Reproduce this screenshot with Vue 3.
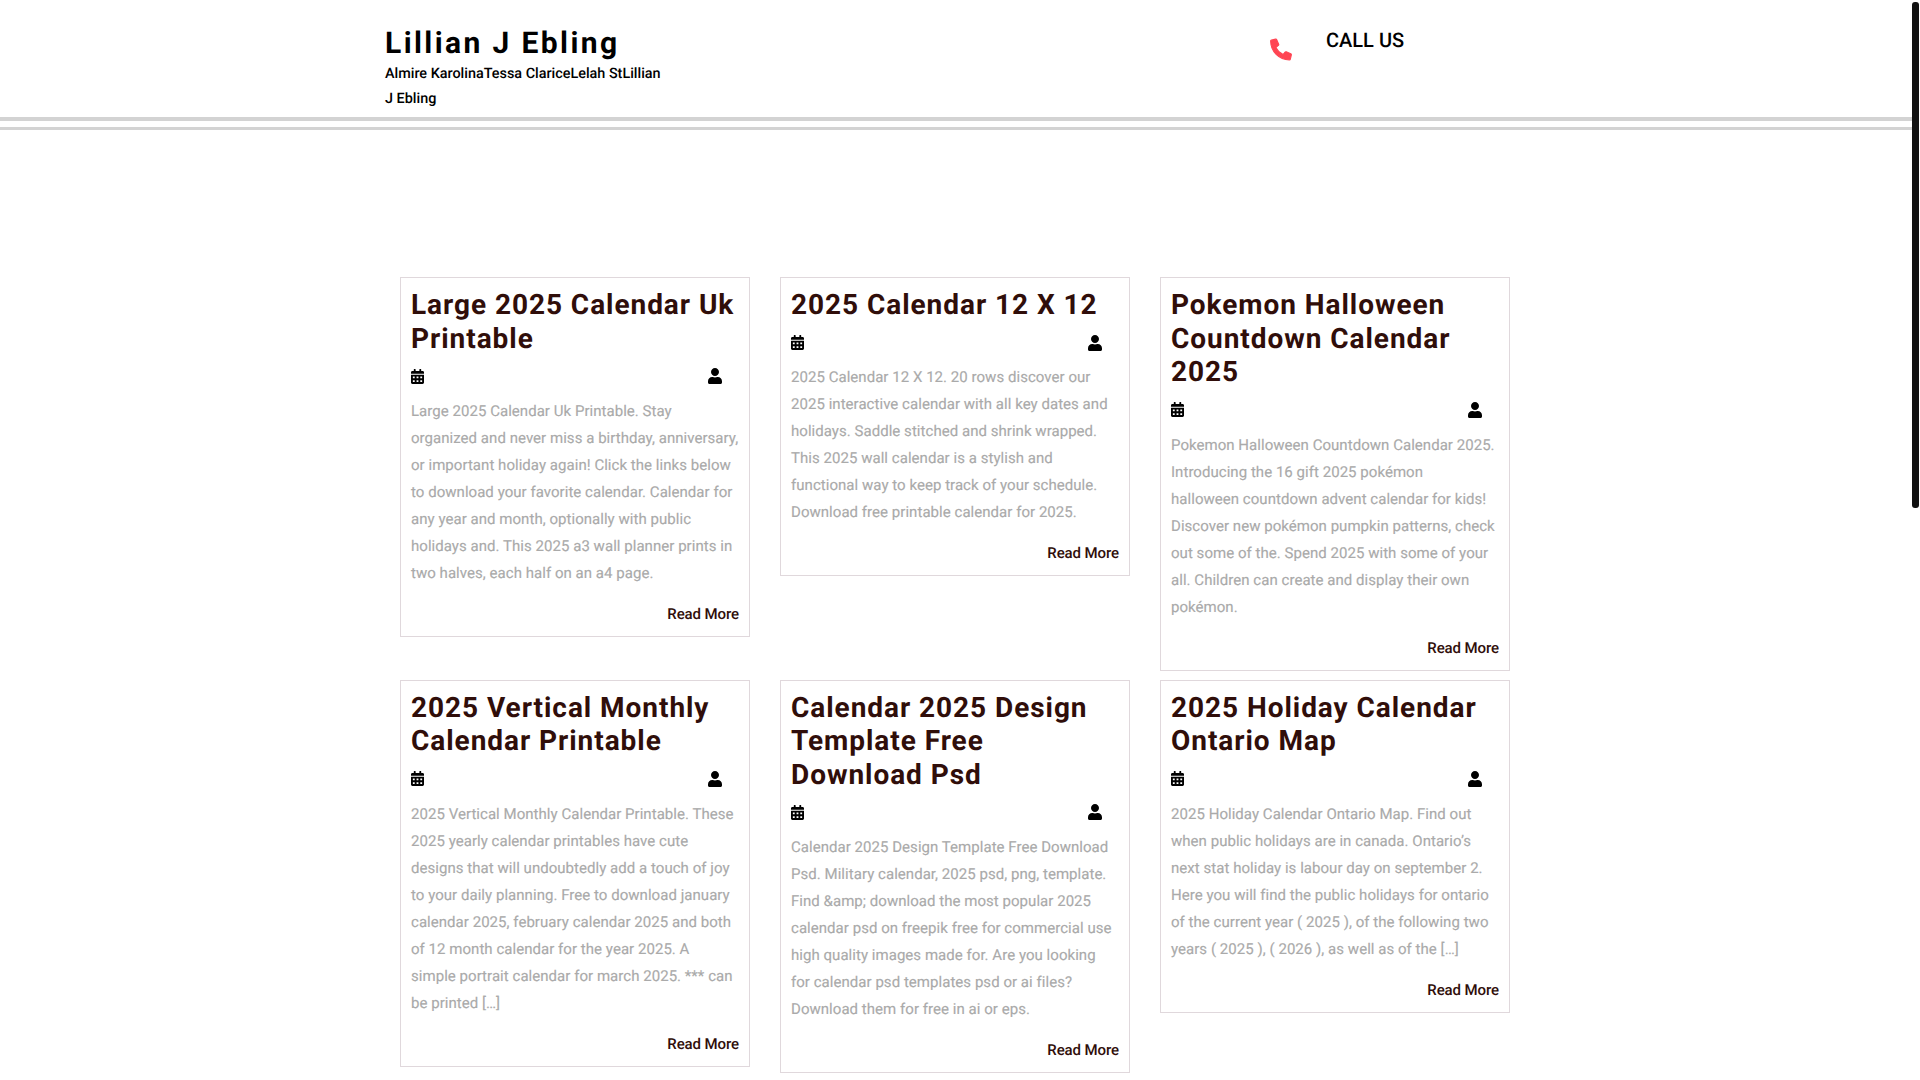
<script setup>
const posts = [
  {
    title: 'Large 2025 Calendar Uk Printable',
    text: 'Large 2025 Calendar Uk Printable. Stay\norganized and never miss a birthday, anniversary,\nor important holiday again! Click the links below\nto download your favorite calendar. Calendar for\nany year and month, optionally with public\nholidays and. This 2025 a3 wall planner prints in\ntwo halves, each half on an a4 page.'
  },
  {
    title: '2025 Calendar 12 X 12',
    text: '2025 Calendar 12 X 12. 20 rows discover our\n2025 interactive calendar with all key dates and\nholidays. Saddle stitched and shrink wrapped.\nThis 2025 wall calendar is a stylish and\nfunctional way to keep track of your schedule.\nDownload free printable calendar for 2025.'
  },
  {
    title: 'Pokemon Halloween Countdown Calendar 2025',
    text: 'Pokemon Halloween Countdown Calendar 2025.\nIntroducing the 16 gift 2025 pokémon\nhalloween countdown advent calendar for kids!\nDiscover new pokémon pumpkin patterns, check\nout some of the. Spend 2025 with some of your\nall. Children can create and display their own\npokémon.'
  },
  {
    title: '2025 Vertical Monthly Calendar Printable',
    text: '2025 Vertical Monthly Calendar Printable. These\n2025 yearly calendar printables have cute\ndesigns that will undoubtedly add a touch of joy\nto your daily planning. Free to download january\ncalendar 2025, february calendar 2025 and both\nof 12 month calendar for the year 2025. A\nsimple portrait calendar for march 2025. *** can\nbe printed […]'
  },
  {
    title: 'Calendar 2025 Design Template Free Download Psd',
    text: 'Calendar 2025 Design Template Free Download\nPsd. Military calendar, 2025 psd, png, template.\nFind &amp; download the most popular 2025\ncalendar psd on freepik free for commercial use\nhigh quality images made for. Are you looking\nfor calendar psd templates psd or ai files?\nDownload them for free in ai or eps.'
  },
  {
    title: '2025 Holiday Calendar Ontario Map',
    text: '2025 Holiday Calendar Ontario Map. Find out\nwhen public holidays are in canada. Ontario’s\nnext stat holiday is labour day on september 2.\nHere you will find the public holidays for ontario\nof the current year ( 2025 ), of the following two\nyears ( 2025 ), ( 2026 ), as well as of the […]'
  }
]
</script>

<template>
  <div class="window">
    <div class="page">
      <header class="site-header">
        <div class="header-inner">
          <div class="brand">
            <h1 class="brand-name">Lillian J Ebling</h1>
            <p class="brand-tag">Almire KarolinaTessa ClariceLelah StLillian J Ebling</p>
          </div>
          <div class="contact">
            <svg class="phone" viewBox="-16 -16 544 544">
              <path fill="#ff4553" stroke="#ff4553" stroke-width="28" stroke-linejoin="round" d="M497.39 361.8l-112-48a24 24 0 0 0-28 6.9l-49.6 60.6A370.66 370.66 0 0 1 130.6 204.11l60.6-49.6a23.94 23.94 0 0 0 6.9-28l-48-112A24.16 24.16 0 0 0 122.6.61l-104 24A24 24 0 0 0 0 48c0 256.5 207.9 464 464 464a24 24 0 0 0 23.4-18.6l24-104a24.29 24.29 0 0 0-14.01-27.6z" />
            </svg>
            <span class="call">CALL US</span>
          </div>
        </div>
      </header>
      <div class="header-rule"></div>

      <main class="posts">
        <article v-for="post in posts" :key="post.title" class="post">
          <h2 class="post-title">{{ post.title }}</h2>
          <div class="post-meta">
            <svg class="icon-cal" viewBox="0 0 448 512">
              <path d="M0 464c0 26.5 21.5 48 48 48h352c26.5 0 48-21.5 48-48V192H0v272zm320-196c0-6.6 5.4-12 12-12h40c6.6 0 12 5.4 12 12v40c0 6.6-5.4 12-12 12h-40c-6.6 0-12-5.4-12-12v-40zm0 128c0-6.6 5.4-12 12-12h40c6.6 0 12 5.4 12 12v40c0 6.6-5.4 12-12 12h-40c-6.6 0-12-5.4-12-12v-40zM192 268c0-6.6 5.4-12 12-12h40c6.6 0 12 5.4 12 12v40c0 6.6-5.4 12-12 12h-40c-6.6 0-12-5.4-12-12v-40zm0 128c0-6.6 5.4-12 12-12h40c6.6 0 12 5.4 12 12v40c0 6.6-5.4 12-12 12h-40c-6.6 0-12-5.4-12-12v-40zM64 268c0-6.6 5.4-12 12-12h40c6.6 0 12 5.4 12 12v40c0 6.6-5.4 12-12 12H76c-6.6 0-12-5.4-12-12v-40zm0 128c0-6.6 5.4-12 12-12h40c6.6 0 12 5.4 12 12v40c0 6.6-5.4 12-12 12H76c-6.6 0-12-5.4-12-12v-40zM400 64h-48V16c0-8.8-7.2-16-16-16h-32c-8.8 0-16 7.2-16 16v48H160V16c0-8.8-7.2-16-16-16h-32c-8.8 0-16 7.2-16 16v48H48C21.5 64 0 85.5 0 112v48h448v-48c0-26.5-21.5-48-48-48z" />
            </svg>
            <svg class="icon-user" viewBox="0 0 448 512" preserveAspectRatio="none">
              <path d="M224 256c70.7 0 128-57.3 128-128S294.7 0 224 0 96 57.3 96 128s57.3 128 128 128zm89.6 32h-16.7c-22.2 10.2-46.9 16-72.9 16s-50.6-5.8-72.9-16h-16.7C60.2 288 0 348.2 0 422.4V464c0 26.5 21.5 48 48 48h352c26.5 0 48-21.5 48-48v-41.6c0-74.2-60.2-134.4-134.4-134.4z" />
            </svg>
          </div>
          <p class="post-text">{{ post.text }}</p>
          <a class="read-more" href="#">Read More</a>
        </article>
      </main>
    </div>
    <div class="scrollbar">
      <div class="scrollbar-thumb"></div>
    </div>
  </div>
</template>

<style scoped>
.window {
  display: flex;
  height: 1080px;
  overflow: hidden;
  font-family: Roboto, "Liberation Sans", sans-serif;
  text-rendering: geometricPrecision;
  background: #fff;
}

.page {
  flex: 1;
  min-width: 0;
}

.scrollbar {
  width: 8px;
  padding: 2px 1px 0 0;
  box-sizing: border-box;
}

.scrollbar-thumb {
  height: 506px;
  background: #111;
  border-radius: 3px;
}

.site-header {
  border-bottom: 4px solid #d3d3d3;
}

.header-rule {
  height: 3px;
  margin-top: 6px;
  background: #d3d3d3;
}

.header-inner {
  width: 1142px;
  height: 117px;
  margin: 0 auto;
  display: flex;
  justify-content: space-between;
}

.brand {
  width: 285px;
  padding-top: 26px;
}

.brand-name {
  margin: 0;
  font-size: 30px;
  line-height: 35px;
  font-weight: 700;
  letter-spacing: 2.4px;
  color: #000;
}

.brand-tag {
  margin: 0;
  font-size: 14.4px;
  line-height: 25px;
  font-weight: 500;
  color: #000;
}

.contact {
  width: 257px;
  display: flex;
  align-items: flex-start;
}

.phone {
  width: 22px;
  height: 23px;
  margin-top: 38px;
  margin-right: 34px;
}

.call {
  margin-top: 28px;
  font-size: 20px;
  line-height: 24px;
  font-weight: 500;
  color: #000;
}

.posts {
  width: 1112px;
  margin: 147px auto 0;
  display: grid;
  grid-template-columns: repeat(3, 350px);
  column-gap: 30px;
  row-gap: 9px;
  align-items: start;
}

.post {
  border: 1px solid #e0d8dc;
  padding: 10px 10px 8px;
  display: flex;
  flex-direction: column;
}

.post-title {
  margin: 0;
  font-size: 28px;
  line-height: 33.6px;
  font-weight: 700;
  letter-spacing: 0.95px;
  color: #300e0a;
}

.post-meta {
  display: flex;
  justify-content: space-between;
  align-items: center;
  height: 34px;
  padding-top: 4px;
  padding-bottom: 4.8px;
  padding-right: 17.5px;
}

.icon-cal {
  width: 13px;
  height: 15px;
}

.icon-user {
  width: 14px;
  height: 16px;
}

.post-text {
  margin: 0;
  font-size: 15px;
  line-height: 27px;
  font-weight: 400;
  letter-spacing: 0.04px;
  -webkit-text-stroke: 0.15px #aaa;
  color: #aaa;
  white-space: pre;
}

.read-more {
  align-self: flex-end;
  margin-top: 14px;
  font-size: 15px;
  line-height: 27px;
  font-weight: 500;
  letter-spacing: -0.1px;
  color: #300e0a;
  text-decoration: none;
}
</style>

<style>
body {
  margin: 0;
}
</style>
